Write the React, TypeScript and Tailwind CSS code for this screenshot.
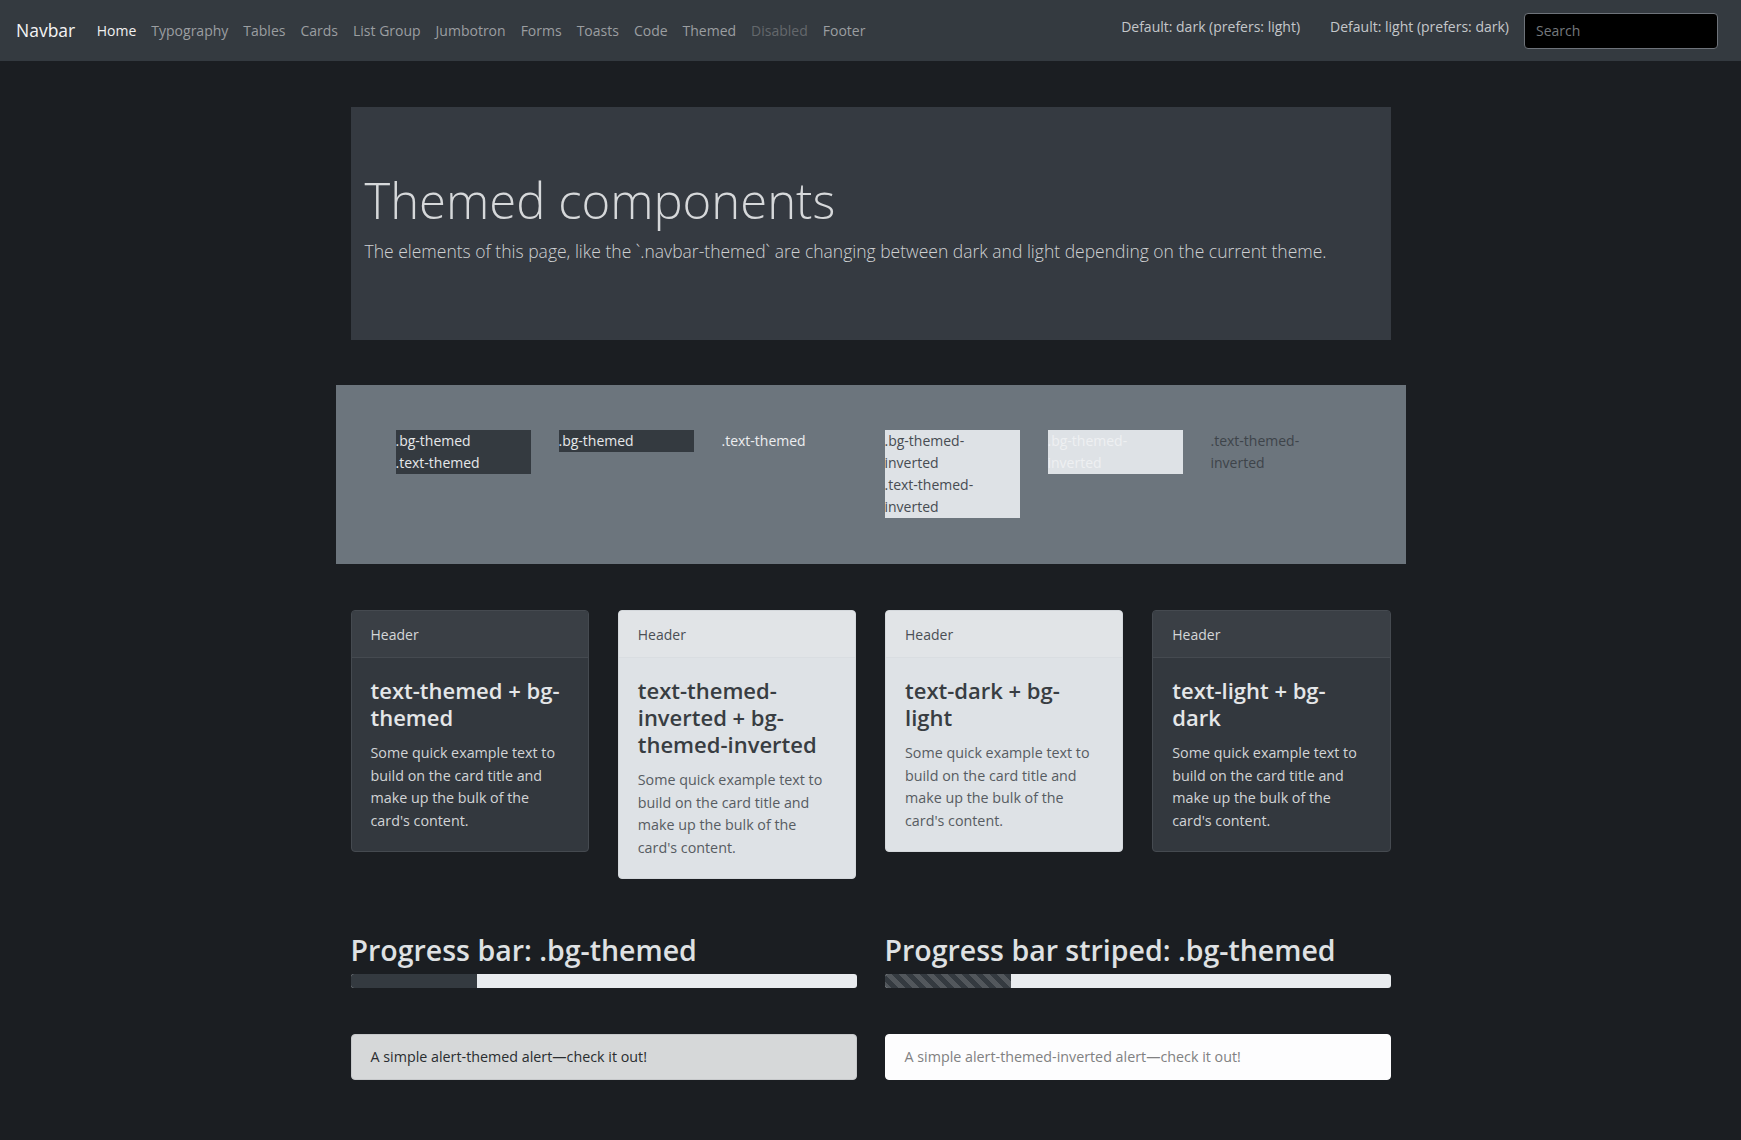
const navLinks = [
  { label: "Home", cls: "text-[#f1f1f1]" },
  { label: "Typography", cls: "text-[#9b9ea1]" },
  { label: "Tables", cls: "text-[#9b9ea1]" },
  { label: "Cards", cls: "text-[#9b9ea1]" },
  { label: "List Group", cls: "text-[#9b9ea1]" },
  { label: "Jumbotron", cls: "text-[#9b9ea1]" },
  { label: "Forms", cls: "text-[#9b9ea1]" },
  { label: "Toasts", cls: "text-[#9b9ea1]" },
  { label: "Code", cls: "text-[#9b9ea1]" },
  { label: "Themed", cls: "text-[#9b9ea1]" },
  { label: "Disabled", cls: "text-[#64686c]" },
  { label: "Footer", cls: "text-[#9b9ea1]" },
];

const cards = [
  {
    title: "text-themed + bg-themed",
    card: "bg-[#33383e] border-[#454a50]",
    header: "bg-[#3a3f45] border-[#454a50] text-[#d4d6d8]",
    titleCls: "text-[#e4e6e8]",
    text: "text-[#d2d4d6]",
  },
  {
    title: "text-themed-inverted + bg-themed-inverted",
    card: "bg-[#dee2e6] border-[#d4d8dc]",
    header: "bg-[#e1e4e7] border-[#d9dde1] text-[#4a4f55]",
    titleCls: "text-[#383d42]",
    text: "text-[#575c62]",
  },
  {
    title: "text-dark + bg-light",
    card: "bg-[#dee2e6] border-[#d4d8dc]",
    header: "bg-[#e1e4e7] border-[#d9dde1] text-[#4a4f55]",
    titleCls: "text-[#383d42]",
    text: "text-[#575c62]",
  },
  {
    title: "text-light + bg-dark",
    card: "bg-[#33383e] border-[#454a50]",
    header: "bg-[#3a3f45] border-[#454a50] text-[#d4d6d8]",
    titleCls: "text-[#e4e6e8]",
    text: "text-[#d2d4d6]",
  },
];

export default function App() {
  return (
    <div className="min-h-[1140px] bg-[#1b1e22] font-['Open_Sans',sans-serif] pb-[60px]">
      {/* Navbar */}
      <nav className="h-[61px] bg-[#343a40] flex items-center pl-[16px] pr-[23px]">
        <span className="text-[17.5px] text-[#f4f4f4] mr-[14px]">Navbar</span>
        <ul className="flex items-center">
          {navLinks.map((l) => (
            <li key={l.label} className={`px-[7.5px] text-[14px] ${l.cls}`}>
              {l.label}
            </li>
          ))}
        </ul>
        <div className="ml-auto flex items-center">
          <span className="text-[14px] text-[#c4c7ca] mb-[8px]">Default: dark (prefers: light)</span>
          <span className="text-[14px] text-[#c4c7ca] mb-[8px] ml-[30px]">Default: light (prefers: dark)</span>
          <input
            placeholder="Search"
            className="ml-[15px] w-[194px] h-[36px] bg-black border border-[#6e737a] rounded-[4px] px-[11px] text-[14px] text-[#ccc] placeholder:text-[#74787d] outline-none"
          />
        </div>
      </nav>

      <main className="w-[1070px] mx-auto pt-[46px]">
        {/* Jumbotron */}
        <section className="mx-[15px] h-[233px] bg-[#353a41] px-[14px] pt-[58px]">
          <h1 className="text-[49px] leading-[70px] font-light text-[#d6d8da]">Themed components</h1>
          <p className="mt-[4px] text-[17.5px] leading-[24px] font-light text-[#cfd1d3]">
            The elements of this page, like the `.navbar-themed` are changing between dark and light depending on the current theme.
          </p>
        </section>

        {/* Utility classes panel */}
        <section className="mt-[45px] h-[179px] bg-[#6c757d] pl-[60px] pt-[45px] text-[14px] leading-[22px]">
          <div className="grid grid-cols-[135px_135px_135px_135px_135px_135px] gap-x-[28px] items-start">
            <div className="bg-[#343a40] text-[#e6e8ea]">
              <div>.bg-themed</div>
              <div>.text-themed</div>
            </div>
            <div className="bg-[#343a40] text-[#e6e8ea]">.bg-themed</div>
            <div className="text-[#eceef0]">.text-themed</div>
            <div className="bg-[#dee2e6] text-[#474c52]">
              <div>.bg-themed-</div>
              <div>inverted</div>
              <div>.text-themed-</div>
              <div>inverted</div>
            </div>
            <div className="bg-[#dee2e6] text-[#eef0f2]">
              <div>.bg-themed-</div>
              <div>inverted</div>
            </div>
            <div className="text-[#3e444a]">
              <div>.text-themed-</div>
              <div>inverted</div>
            </div>
          </div>
        </section>

        {/* Cards */}
        <section className="mt-[46px] mx-[15px] grid grid-cols-4 gap-x-[29px] items-start">
          {cards.map((c) => (
            <div key={c.title} className={`border rounded-[4px] overflow-hidden ${c.card}`}>
              <div className={`h-[47px] border-b px-[19px] flex items-center text-[14px] ${c.header}`}>Header</div>
              <div className="px-[19px] pt-[19px] pb-[19px]">
                <h5 className={`text-[22px] leading-[27px] font-semibold mb-[11px] ${c.titleCls}`}>{c.title}</h5>
                <p className={`pr-[2px] text-[14.3px] leading-[22.5px] ${c.text}`}>
                  Some quick example text to build on the card title and make up the bulk of the card's content.
                </p>
              </div>
            </div>
          ))}
        </section>

        {/* Progress bars */}
        <section className="mt-[54px] mx-[15px] grid grid-cols-2 gap-x-[28px]">
          <div>
            <h3 className="text-[28.5px] leading-[34px] font-semibold text-[#dfe1e3]">Progress bar: .bg-themed</h3>
            <div className="mt-[7px] h-[14px] rounded-[3px] bg-[#e9ecef] overflow-hidden flex">
              <div className="w-1/4 bg-[#343a40]" />
            </div>
          </div>
          <div>
            <h3 className="text-[28.5px] leading-[34px] font-semibold text-[#dfe1e3]">Progress bar striped: .bg-themed</h3>
            <div className="mt-[7px] h-[14px] rounded-[3px] bg-[#e9ecef] overflow-hidden flex">
              <div className="w-1/4 bg-[#343a40] bg-[linear-gradient(45deg,rgba(255,255,255,.15)_25%,transparent_25%,transparent_50%,rgba(255,255,255,.15)_50%,rgba(255,255,255,.15)_75%,transparent_75%,transparent)] bg-[length:14px_14px]" />
            </div>
          </div>
        </section>

        {/* Alerts */}
        <section className="mt-[46px] mx-[15px] grid grid-cols-2 gap-x-[28px]">
          <div className="h-[46px] rounded-[4px] border border-[#c6c8ca] bg-[#d6d8d9] px-[19px] flex items-center text-[14.3px] text-[#2a2d30]">
            A simple alert-themed alert—check it out!
          </div>
          <div className="h-[46px] rounded-[4px] border border-[#fdfdfe] bg-[#fdfdfe] px-[19px] flex items-center text-[14.3px] text-[#818182]">
            A simple alert-themed-inverted alert—check it out!
          </div>
        </section>
      </main>
    </div>
  );
}
